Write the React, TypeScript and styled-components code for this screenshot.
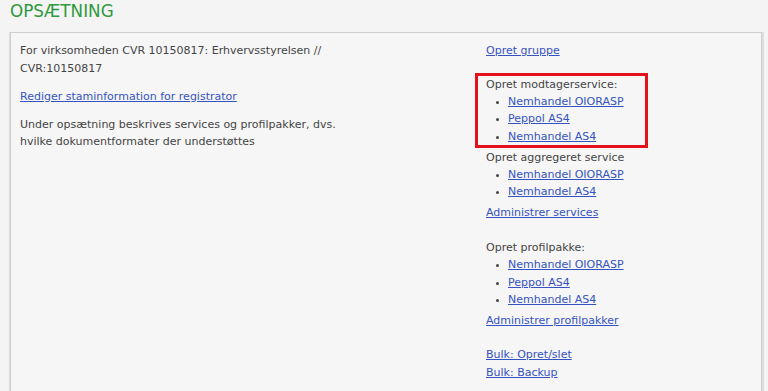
import React from "react";
import styled, { createGlobalStyle } from "styled-components";

const GlobalStyle = createGlobalStyle`
  html, body {
    margin: 0;
    padding: 0;
    background: #f4f4f4;
  }
  body {
    font-family: "DejaVu Sans", Verdana, sans-serif;
    font-size: 11px;
    line-height: 17.3px;
    color: #444;
  }
`;

const Page = styled.div`
  display: flex;
  flex-direction: column;
  height: 100vh;
  overflow: hidden;
  padding: 0 6px 0 10px;
`;

const Title = styled.h1`
  margin: 0;
  height: 32px;
  flex: none;
  font-size: 16.8px;
  font-weight: normal;
  line-height: 23px;
  color: #2f9a3e;
`;

const Panel = styled.div`
  flex: 1;
  display: grid;
  grid-template-columns: 466px 1fr;
  align-content: start;
  background: #f6f6f6;
  border: 1px solid #cfcfcf;
  border-bottom: none;
  box-shadow: 2px 0 0 #dedede, -1px 0 0 #dcdcdc;
  padding: 9.35px 0 0 9px;
`;

const LeftCol = styled.div`
  max-width: 350px;
`;

const Para = styled.p`
  margin: 0 0 10.7px;
`;

const Link = styled.a`
  color: #3553c0;
  text-decoration: underline;
  cursor: pointer;
`;

const RightCol = styled.div`
  display: flex;
  flex-direction: column;
  align-items: flex-start;
`;

const Block = styled.div<{ $gap?: number }>`
  margin-bottom: ${(p) => p.$gap ?? 0}px;
`;

const Highlight = styled.div`
  border: 3px solid #e3111b;
  margin: 0 0 1px -11px;
  padding: 0 0 0 8px;
  width: 159px;
`;

const List = styled.ul`
  margin: 0;
  padding-left: 22px;
  list-style: disc;
  li::marker {
    font-size: 9px;
  }
`;

const Item = styled.li``;

type Section = { heading: string; items: string[] };

const SubList: React.FC<Section> = ({ heading, items }) => (
  <>
    <div>{heading}</div>
    <List>
      {items.map((t) => (
        <Item key={t}>
          <Link>{t}</Link>
        </Item>
      ))}
    </List>
  </>
);

export default function App() {
  return (
    <>
      <GlobalStyle />
      <Page>
        <Title>OPSÆTNING</Title>
        <Panel>
          <LeftCol>
            <Para>For virksomheden CVR 10150817: Erhvervsstyrelsen // CVR:10150817</Para>
            <Para>
              <Link>Rediger staminformation for registrator</Link>
            </Para>
            <Para>
              Under opsætning beskrives services og profilpakker, dvs. hvilke dokumentformater der
              understøttes
            </Para>
          </LeftCol>
          <RightCol>
            <Block $gap={13}>
              <Link>Opret gruppe</Link>
            </Block>
            <Highlight>
              <SubList
                heading="Opret modtagerservice:"
                items={["Nemhandel OIORASP", "Peppol AS4", "Nemhandel AS4"]}
              />
            </Highlight>
            <Block $gap={3.7}>
              <SubList heading="Opret aggregeret service" items={["Nemhandel OIORASP", "Nemhandel AS4"]} />
            </Block>
            <Block $gap={17.3}>
              <Link>Administrer services</Link>
            </Block>
            <Block $gap={3.7}>
              <SubList
                heading="Opret profilpakke:"
                items={["Nemhandel OIORASP", "Peppol AS4", "Nemhandel AS4"]}
              />
            </Block>
            <Block $gap={17.3}>
              <Link>Administrer profilpakker</Link>
            </Block>
            <Block>
              <Link>Bulk: Opret/slet</Link>
            </Block>
            <Block>
              <Link>Bulk: Backup</Link>
            </Block>
          </RightCol>
        </Panel>
      </Page>
    </>
  );
}
